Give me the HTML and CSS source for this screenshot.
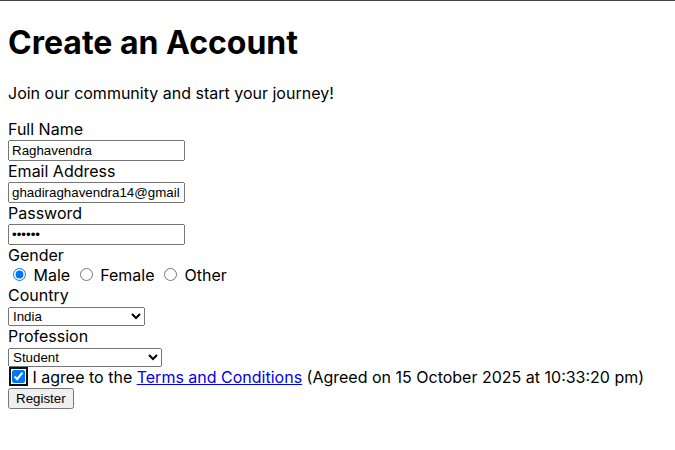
FILE: index.html
```html
<!DOCTYPE html>
<html lang="en">
<head>
<meta charset="utf-8">
<title>Create an Account</title>
<link rel="stylesheet" href="styles.css">
</head>
<body>
<h1 class="title">Create an Account</h1>
<p class="intro">Join our community and start your journey!</p>
<form class="signup">
<label for="name">Full Name</label><br>
<input class="field" type="text" id="name" value="Raghavendra"><br>
<label for="email">Email Address</label><br>
<input class="field" type="email" id="email" value="ghadiraghavendra14@gmail.com"><br>
<label for="pw">Password</label><br>
<input class="field" type="password" id="pw" value="secret"><br>
<label>Gender</label><br>
<input type="radio" name="g" id="m" checked> <label for="m">Male</label>
<input type="radio" name="g" id="f"> <label for="f">Female</label>
<input type="radio" name="g" id="o"> <label for="o">Other</label><br>
<label for="country">Country</label><br>
<select class="pick country" id="country"><option>India</option><option>United States</option></select><br>
<label for="prof">Profession</label><br>
<select class="pick prof" id="prof"><option>Student</option><option>Software Engineer</option></select><br>
<input class="agree" type="checkbox" id="agree" checked> <label for="agree">I agree to the <a href="#">Terms and Conditions</a> (Agreed on 15 October 2025 at 10:33:20 pm)</label><br>
<button class="btn" type="button">Register</button>
</form>
</body>
</html>
```
FILE: styles.css
```css
html {
  border-top: 1px solid #444;
}
body {
  margin: 8px;
  font-family: Inter, "Noto Sans", sans-serif;
  font-size: 16px;
  color: #000;
  background: #fff;
}
.title {
  font-size: 32px;
  font-weight: 700;
  margin: 13.5px 0 21.44px;
}
.intro {
  margin: 16px 0;
}
.field,
.pick,
.btn {
  font-family: "Liberation Sans", Arial, sans-serif;
  font-size: 13.333px;
}
.field {
  width: 177px;
  box-sizing: border-box;
}
.country {
  width: 137px;
}
.prof {
  width: 154px;
}
.agree {
  outline: 2px solid #101010;
  outline-offset: 1px;
  border-radius: 2px;
}
a {
  color: #0000ee;
}
```
